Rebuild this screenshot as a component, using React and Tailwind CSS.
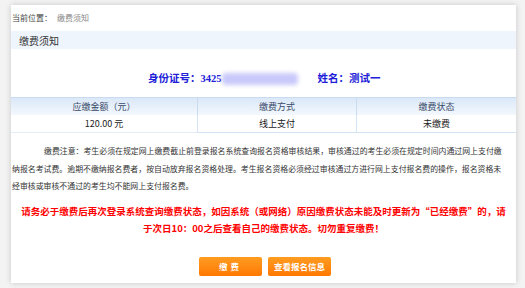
import React from 'react';

const cjk = { fontFamily: '"Noto Sans CJK SC", "Liberation Sans", sans-serif' };

const App = () => {
    const rows = [{ amount: '120.00 元', method: '线上支付', status: '未缴费' }];

    return (
        <div className="w-[525px] h-[288px] bg-[#f3f3f3] overflow-hidden" style={cjk}>
            <div className="ml-[11px] mt-[5px] w-[505px] h-[278px] bg-white shadow-[0_0_6px_rgba(0,0,0,0.18)] flex flex-col">
                {/* breadcrumb */}
                <div className="h-[26px] flex items-center pl-[1px] text-[8px] text-[#444]">
                    <span>当前位置：</span>
                    <span className="ml-[5px] text-[#888]">缴费须知</span>
                </div>

                <div className="h-[18px] bg-[#eef5fc] flex items-center pl-[8px] text-[10px] text-[#333]">
                    缴费须知
                </div>

                {/* id line */}
                <div className="mt-[20px] h-[20px] flex items-center text-[10.5px] font-bold text-[#2020d8]" style={{ fontFamily: '"Liberation Serif", "Noto Sans CJK SC", serif' }}>
                    <span className="ml-[137px]">身份证号：3425</span>
                    <span className="w-[76px] h-[12px] bg-[#c9c9fb] blur-[2px] rounded-sm"></span>
                    <span className="ml-[20px]">姓名：测试一</span>
                </div>

                {/* table */}
                <div className="mt-[8px] grid grid-cols-[186px_159px_160px] text-[9px]">
                    <div className="h-[18px] flex items-center justify-center border-t border-[#c8dbf1] bg-gradient-to-b from-[#dbe8f8] to-[#f3f8fd] text-[#3a4a6a]">应缴金额（元）</div>
                    <div className="h-[18px] flex items-center justify-center border-t border-l border-[#c8dbf1] bg-gradient-to-b from-[#dbe8f8] to-[#f3f8fd] text-[#3a4a6a]">缴费方式</div>
                    <div className="h-[18px] flex items-center justify-center border-t border-l border-[#c8dbf1] bg-gradient-to-b from-[#dbe8f8] to-[#f3f8fd] text-[#3a4a6a]">缴费状态</div>
                    {rows.map((r, i) => (
                        <React.Fragment key={i}>
                            <div className="h-[18px] flex items-center justify-center border-b border-[#e3ecf7] text-[#222]">{r.amount}</div>
                            <div className="h-[18px] flex items-center justify-center border-b border-l border-[#d5e4f5] text-[#222]">{r.method}</div>
                            <div className="h-[18px] flex items-center justify-center border-b border-l border-[#d5e4f5] text-[#222]">{r.status}</div>
                        </React.Fragment>
                    ))}
                </div>

                {/* notice */}
                <p className="mt-[9px] pl-[1px] pr-[7px] text-[7.9px] leading-[17.5px] text-[#333] indent-[32px]">
                    缴费注意：考生必须在规定网上缴费截止前登录报名系统查询报名资格审核结果，审核通过的考生必须在规定时间内通过网上支付缴纳报名考试费。逾期不缴纳报名费者，按自动放弃报名资格处理。考生报名资格必须经过审核通过方进行网上支付报名费的操作，报名资格未经审核或审核不通过的考生均不能网上支付报名费。
                </p>

                <p className="mt-[8px] px-[6px] text-[9.5px] leading-[17px] font-bold text-[#ff0000] text-center">
                    请务必于缴费后再次登录系统查询缴费状态，如因系统（或网络）原因缴费状态未能及时更新为“已经缴费”的，请于次日10：00之后查看自己的缴费状态。切勿重复缴费！
                </p>

                {/* buttons */}
                <div className="mt-[20px] flex justify-center gap-[6px] pl-[3px]">
                    <button className="w-[63px] h-[19px] rounded-[2px] bg-gradient-to-b from-[#ff9c1f] to-[#ff7800] text-white text-[8.5px] font-bold tracking-[3px]">缴费</button>
                    <button className="w-[63px] h-[19px] rounded-[2px] bg-gradient-to-b from-[#ff9c1f] to-[#ff7800] text-white text-[8.5px] font-bold">查看报名信息</button>
                </div>
            </div>
        </div>
    );
};

export default App;
